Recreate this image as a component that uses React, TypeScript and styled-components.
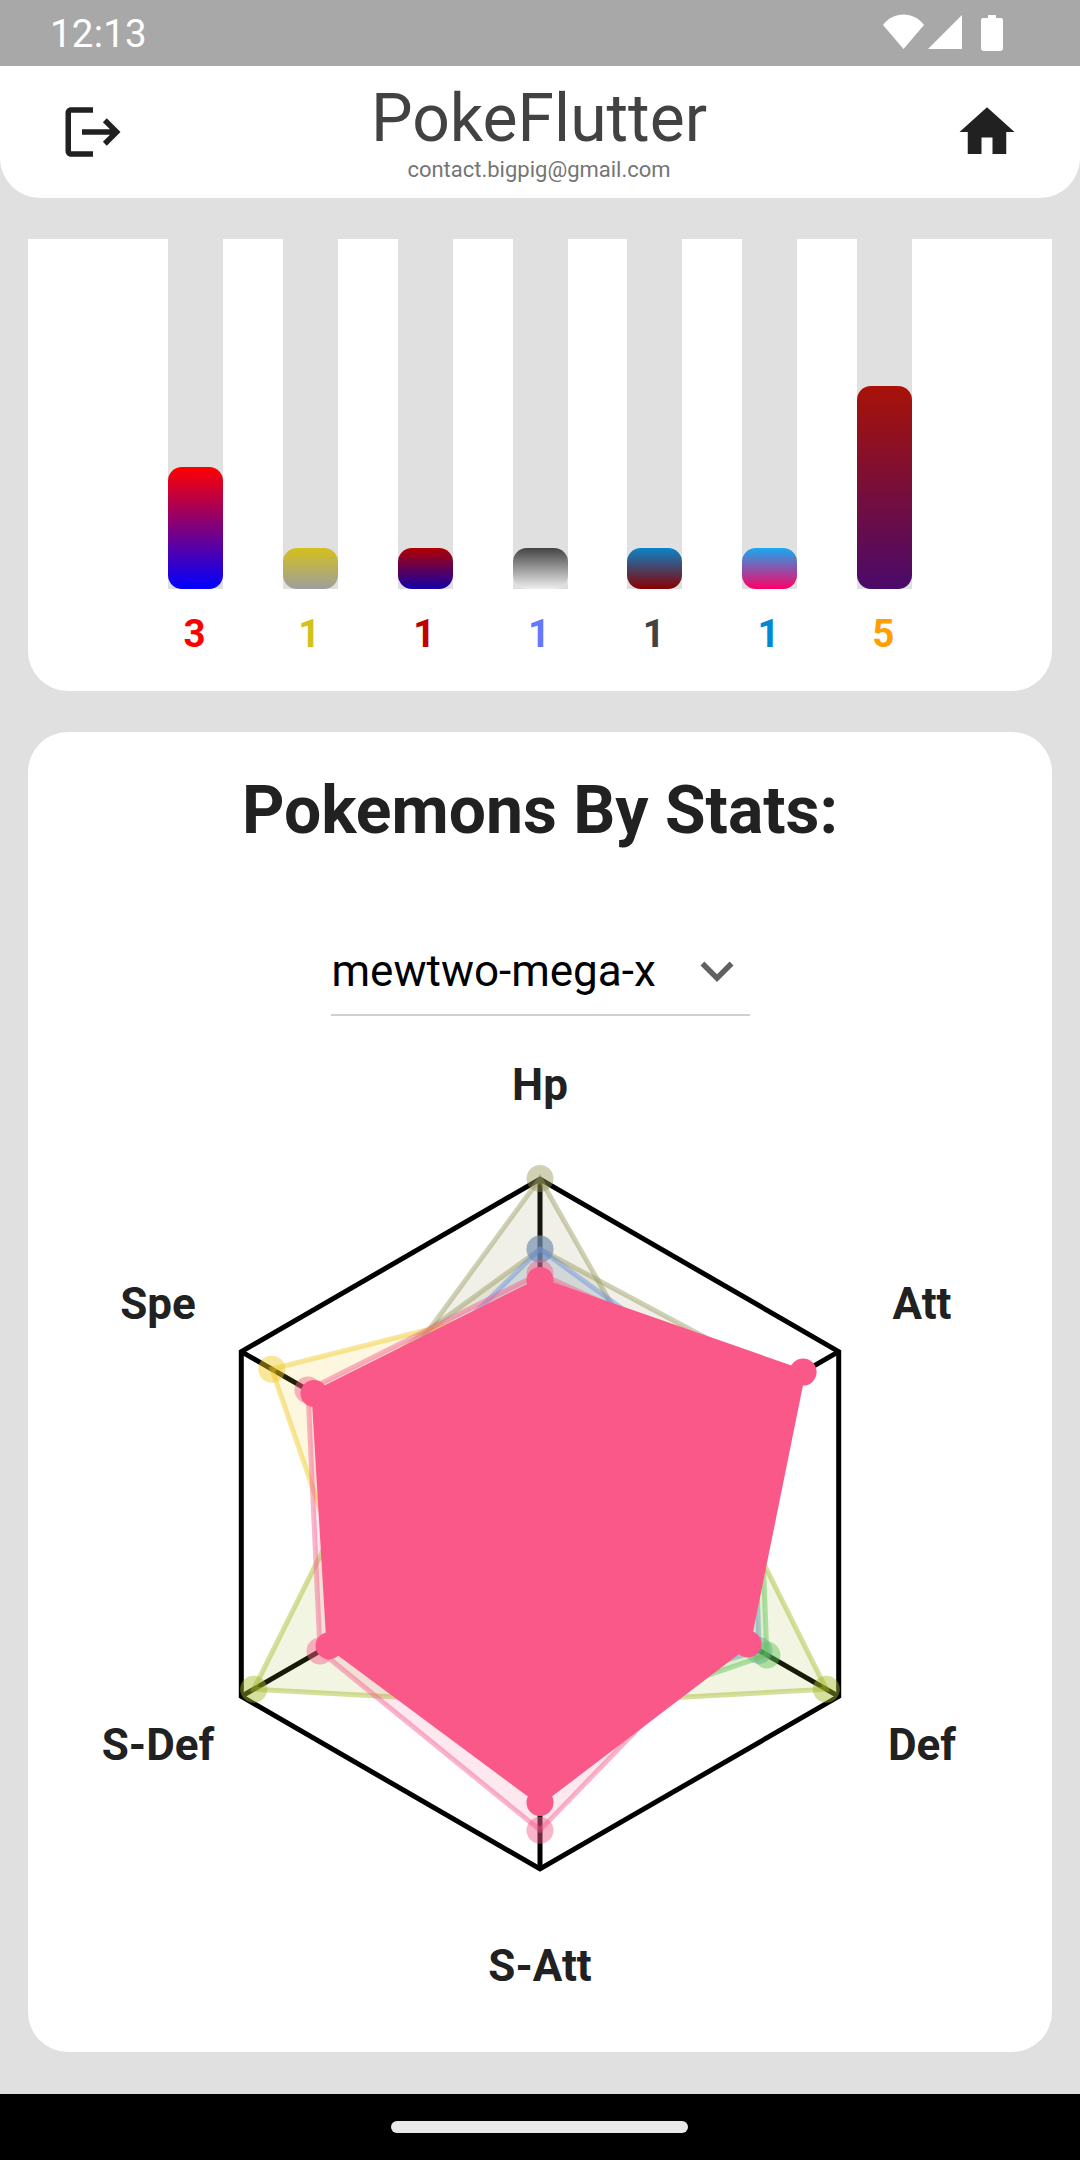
import React from "react";
import styled, { createGlobalStyle } from "styled-components";

const GlobalStyle = createGlobalStyle`
  html, body {
    margin: 0;
    padding: 0;
    background: #e0e0e0;
    font-family: Roboto, "Liberation Sans", sans-serif;
  }
`;

const Screen = styled.div`
  width: 1080px;
  height: 2160px;
  display: flex;
  flex-direction: column;
  background: #e0e0e0;
  overflow: hidden;
`;

const StatusBar = styled.div`
  height: 66px;
  flex: none;
  display: flex;
  align-items: center;
  justify-content: space-between;
  padding: 0 76px 0 50px;
  background: #a8a8a8;
`;

const Clock = styled.span`
  color: #fff;
  font-size: 38.5px;
  letter-spacing: 0.2px;
`;

const Header = styled.header`
  height: 132px;
  flex: none;
  display: flex;
  align-items: center;
  justify-content: space-between;
  padding: 0 60px;
  background: #fff;
  border-radius: 0 0 40px 40px;
`;

const HeaderTitle = styled.div`
  display: flex;
  flex-direction: column;
  align-items: center;
  margin-right: 2px;
`;

const AppName = styled.div`
  font-size: 66px;
  line-height: 78px;
  margin-top: -2px;
  color: #424242;
`;

const Email = styled.div`
  font-size: 22px;
  line-height: 26px;
  margin-top: -1px;
  color: #757575;
`;

const Icon = styled.svg`
  width: 66px;
  height: 66px;
  flex: none;
  display: block;
`;

const Content = styled.main`
  flex: 1;
  display: flex;
  flex-direction: column;
  gap: 41px;
  padding: 41px 28px 0;
`;

const BarsCard = styled.section`
  height: 452px;
  display: flex;
  flex-direction: column;
  align-items: center;
  background: #fff;
  border-radius: 0 0 40px 40px;
`;

const BarsRow = styled.div`
  display: flex;
  gap: 59.8px;
`;

const BarColumn = styled.div`
  width: 55px;
  display: flex;
  flex-direction: column;
  align-items: center;
`;

const BarTrack = styled.div`
  width: 100%;
  height: 350px;
  display: flex;
  align-items: flex-end;
  background: #e0e0e0;
`;

const BarFill = styled.div<{ $from: string; $to: string }>`
  width: 100%;
  border-radius: 14px;
  background: linear-gradient(${(p) => p.$from}, ${(p) => p.$to});
`;

const BarCount = styled.div<{ $color: string }>`
  margin: 22px 2px 0 0;
  font-size: 38.5px;
  line-height: 45px;
  font-weight: 700;
  color: ${(p) => p.$color};
`;

const StatsCard = styled.section`
  height: 1320px;
  display: flex;
  flex-direction: column;
  align-items: center;
  padding-top: 39px;
  box-sizing: border-box;
  background: #fff;
  border-radius: 40px;
`;

const StatsTitle = styled.h2`
  margin: 0;
  font-size: 66px;
  line-height: 80px;
  font-weight: 700;
  color: #212121;
`;

const Select = styled.div`
  width: 419px;
  height: 86px;
  margin-top: 79px;
  padding: 0 0 3px 1px;
  box-sizing: border-box;
  display: flex;
  align-items: center;
  justify-content: space-between;
  border-bottom: 2px solid #d0d0d0;
  font-size: 44px;
  color: #000;
`;

const RadarSvg = styled.svg`
  width: 1024px;
  height: 1020px;
  display: block;
  flex: none;
`;

const AxisLabel = styled.text`
  font-family: Roboto, "Liberation Sans", sans-serif;
  font-size: 44px;
  font-weight: 700;
  fill: #212121;
  text-anchor: middle;
  dominant-baseline: central;
`;

const NavBar = styled.div`
  height: 66px;
  flex: none;
  display: flex;
  align-items: center;
  justify-content: center;
  background: #000;
`;

const NavPill = styled.div`
  width: 297px;
  height: 12px;
  margin-right: 1px;
  border-radius: 6px;
  background: #e9e9e9;
`;

const bars = [
  { count: 3, from: "#ff0000", to: "#0000ff", label: "#ff0000" },
  { count: 1, from: "#d4c01c", to: "#9e9e9e", label: "#d4c21c" },
  { count: 1, from: "#b00000", to: "#1200a8", label: "#c00000" },
  { count: 1, from: "#444444", to: "#eeeeee", label: "#6577ff" },
  { count: 1, from: "#0a84c8", to: "#880000", label: "#424242" },
  { count: 1, from: "#18a8f0", to: "#ff0066", label: "#0288d1" },
  { count: 5, from: "#a81208", to: "#4a0a6a", label: "#ffa000" },
];

// radar center and radius inside the svg
const CX = 512;
const CY = 508;
const R = 348;
const FRAME = 0.991;

const axes = [
  { name: "Hp", x: 512, y: 69 },
  { name: "Att", x: 894, y: 288 },
  { name: "Def", x: 894, y: 729 },
  { name: "S-Att", x: 512, y: 950 },
  { name: "S-Def", x: 130, y: 729 },
  { name: "Spe", x: 130, y: 288 },
];

const series = [
  { color: "150,150,90", v: [0.993, 0.49, 0.4, 0.4, 0.4, 0.59] },
  { color: "150,150,90", v: [0.79, 0.82, 0.4, 0.4, 0.4, 0.7] },
  { color: "100,140,225", v: [0.79, 0.7, 0.727, 0.55, 0.5, 0.586] },
  { color: "240,200,30", v: [0.64, 0.4, 0.4, 0.4, 0.595, 0.89] },
  { color: "165,185,40", v: [0.5, 0.526, 0.95, 0.52, 0.95, 0.526] },
  { color: "90,195,80", v: [0.5, 0.72, 0.753, 0.6, 0.5, 0.5] },
  { color: "245,90,140", v: [0.72, 0.8, 0.63, 0.88, 0.73, 0.77] },
];

const mainSeries = [0.7, 0.873, 0.69, 0.8, 0.7, 0.75];

const point = (i: number, frac: number) => {
  const a = (Math.PI / 3) * i;
  return [CX + R * frac * Math.sin(a), CY - R * frac * Math.cos(a)];
};

const toPoints = (v: number[]) =>
  v.map((f, i) => point(i, f).map((n) => n.toFixed(1)).join(",")).join(" ");

const Radar = () => (
  <RadarSvg viewBox="0 0 1024 1020">
    {axes.map((a, i) => {
      const [x, y] = point(i, FRAME);
      return <line key={a.name} x1={CX} y1={CY} x2={x} y2={y} stroke="#000" strokeWidth={5} />;
    })}
    <polygon points={toPoints(axes.map(() => FRAME))} fill="none" stroke="#000" strokeWidth={5} />
    {series.map((s, n) => (
      <g key={n}>
        <polygon
          points={toPoints(s.v)}
          fill={`rgba(${s.color},0.14)`}
          stroke={`rgba(${s.color},0.45)`}
          strokeWidth={5}
        />
        {s.v.map((f, i) => {
          const [x, y] = point(i, f);
          return <circle key={i} cx={x} cy={y} r={13.5} fill={`rgba(${s.color},0.45)`} />;
        })}
      </g>
    ))}
    <polygon points={toPoints(mainSeries)} fill="#fa5889" stroke="#fa5889" strokeWidth={5} />
    {mainSeries.map((f, i) => {
      const [x, y] = point(i, f);
      return <circle key={i} cx={x} cy={y} r={13.5} fill="#fa5889" />;
    })}
    {axes.map((a) => (
      <AxisLabel key={a.name} x={a.x} y={a.y}>
        {a.name}
      </AxisLabel>
    ))}
  </RadarSvg>
);

const StatusIcons = () => (
  <svg width="121" height="38" viewBox="0 0 121 38">
    <path d="M0 11 C10 -3 31 -3 41 11 L20.5 35 Z" fill="#fff" />
    <path d="M79 1 V35 H45 Z" fill="#fff" />
    <path d="M98 6 Q98 4 100 4 H105 V1 H113 V4 H118 Q120 4 120 6 V34 Q120 37 117 37 H101 Q98 37 98 34 Z" fill="#fff" />
  </svg>
);

const App = () => (
  <Screen>
    <GlobalStyle />
    <StatusBar>
      <Clock>12:13</Clock>
      <StatusIcons />
    </StatusBar>
    <Header>
      <Icon viewBox="0 0 24 24">
        <path
          fill="#212121"
          d="M17 7l-1.41 1.41L18.17 11H8v2h10.17l-2.58 2.58L17 17l5-5zM4 5h8V3H4c-1.1 0-2 .9-2 2v14c0 1.1.9 2 2 2h8v-2H4V5z"
        />
      </Icon>
      <HeaderTitle>
        <AppName>PokeFlutter</AppName>
        <Email>contact.bigpig@gmail.com</Email>
      </HeaderTitle>
      <Icon viewBox="0 0 24 24">
        <path fill="#212121" d="M10 20v-6h4v6h5v-8h3L12 3 2 12h3v8z" />
      </Icon>
    </Header>
    <Content>
      <BarsCard>
        <BarsRow>
          {bars.map((b, i) => (
            <BarColumn key={i}>
              <BarTrack>
                <BarFill
                  $from={b.from}
                  $to={b.to}
                  style={{ height: Math.round(b.count * 40.6) }}
                />
              </BarTrack>
              <BarCount $color={b.label}>{b.count}</BarCount>
            </BarColumn>
          ))}
        </BarsRow>
      </BarsCard>
      <StatsCard>
        <StatsTitle>Pokemons By Stats:</StatsTitle>
        <Select>
          mewtwo-mega-x
          <Icon viewBox="0 0 24 24">
            <path fill="#616161" d="M7.41 8.59L12 13.17l4.59-4.58L18 10l-6 6-6-6 1.41-1.41z" />
          </Icon>
        </Select>
        <Radar />
      </StatsCard>
    </Content>
    <NavBar>
      <NavPill />
    </NavBar>
  </Screen>
);

export default App;
